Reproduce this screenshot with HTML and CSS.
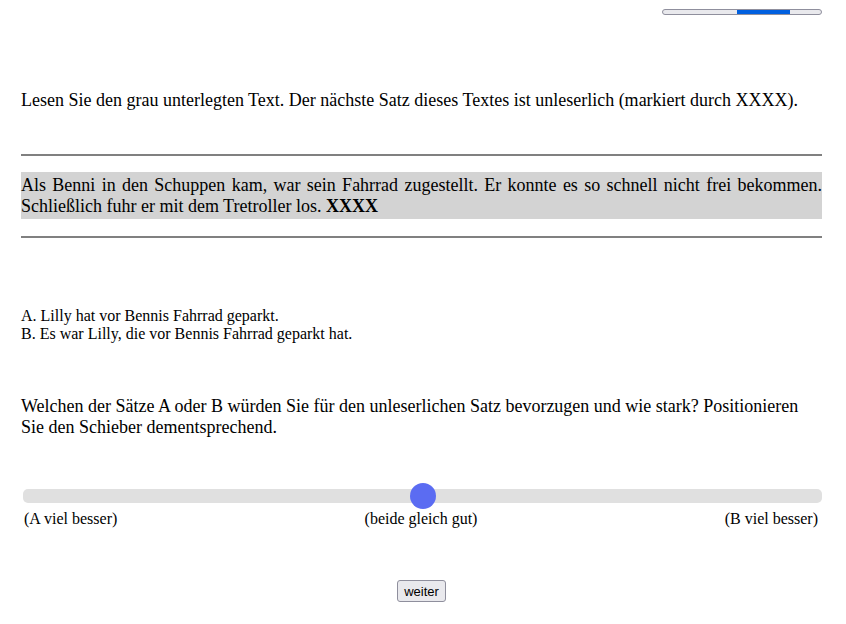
FILE: index.html
```html
<!DOCTYPE html>
<html lang="de">
<head>
<meta charset="utf-8">
<link rel="stylesheet" href="styles.css">
</head>
<body>
<div class="page">
  <div class="progress-row">
    <div class="progress"><div class="progress-fill"></div></div>
  </div>
  <p class="instruction">Lesen Sie den grau unterlegten Text. Der nächste Satz dieses Textes ist unleserlich (markiert durch XXXX).</p>
  <hr class="rule rule-top">
  <div class="passage">Als Benni in den Schuppen kam, war sein Fahrrad zugestellt. Er konnte es so schnell nicht frei bekommen. Schließlich fuhr er mit dem Tretroller los. <b>XXXX</b></div>
  <hr class="rule rule-bottom">
  <div class="options">
    <div>A. Lilly hat vor Bennis Fahrrad geparkt.</div>
    <div>B. Es war Lilly, die vor Bennis Fahrrad geparkt hat.</div>
  </div>
  <p class="question">Welchen der Sätze A oder B würden Sie für den unleserlichen Satz bevorzugen und wie stark? Positionieren Sie den Schieber dementsprechend.</p>
  <div class="slider">
    <div class="track"><div class="thumb"></div></div>
    <div class="labels">
      <span>(A viel besser)</span>
      <span>(beide gleich gut)</span>
      <span>(B viel besser)</span>
    </div>
  </div>
  <div class="actions"><button class="btn">weiter</button></div>
</div>
</body>
</html>
```
FILE: styles.css
```css
html, body {
  margin: 0;
  padding: 0;
  background: #fff;
}
body {
  font-family: "Liberation Serif", "Times New Roman", serif;
  font-size: 18px;
  color: #000;
}
.page {
  width: 801px;
  margin-left: 21px;
}
.progress-row {
  display: flex;
  justify-content: flex-end;
  padding-top: 9px;
}
.progress {
  position: relative;
  width: 158px;
  height: 4px;
  border: 1px solid #8f8f9d;
  border-radius: 3px;
  background: #e9e9ed;
  overflow: hidden;
}
.progress-fill {
  position: absolute;
  left: 74px;
  top: 0;
  width: 53px;
  height: 100%;
  background: #0060df;
}
.instruction {
  margin: 75px 0 0;
  line-height: 21px;
}
.rule {
  border: 0;
  height: 2px;
  background: #808080;
}
.rule-top {
  margin: 43px 0 0;
}
.rule-bottom {
  margin: 17px 0 0;
}
.passage {
  margin: 16px 0 0;
  background: #d3d3d3;
  text-align: justify;
  line-height: 21px;
  padding: 3px 0 2px;
}
.options {
  margin-top: 69px;
  font-size: 16px;
  line-height: 18px;
}
.question {
  margin: 53px 0 0;
  line-height: 20.5px;
}
.slider {
  margin-top: 52px;
  padding-left: 2px;
}
.track {
  position: relative;
  height: 14px;
  background: #e0e0e0;
  border-radius: 5px;
}
.thumb {
  position: absolute;
  left: 387px;
  top: -6px;
  width: 26px;
  height: 26px;
  border-radius: 50%;
  background: #5b6cf2;
}
.labels {
  display: flex;
  justify-content: space-between;
  padding: 7px 4px 0 1px;
  font-size: 16px;
  line-height: 18px;
}
.actions {
  display: flex;
  justify-content: center;
  margin-top: 52px;
}
.btn {
  font-family: "Liberation Sans", Arial, sans-serif;
  font-size: 13px;
  padding: 3px 6px 2px;
  border: 1px solid #8f8f9d;
  border-radius: 3px;
  background: #e9e9ed;
  color: #000;
}
```
